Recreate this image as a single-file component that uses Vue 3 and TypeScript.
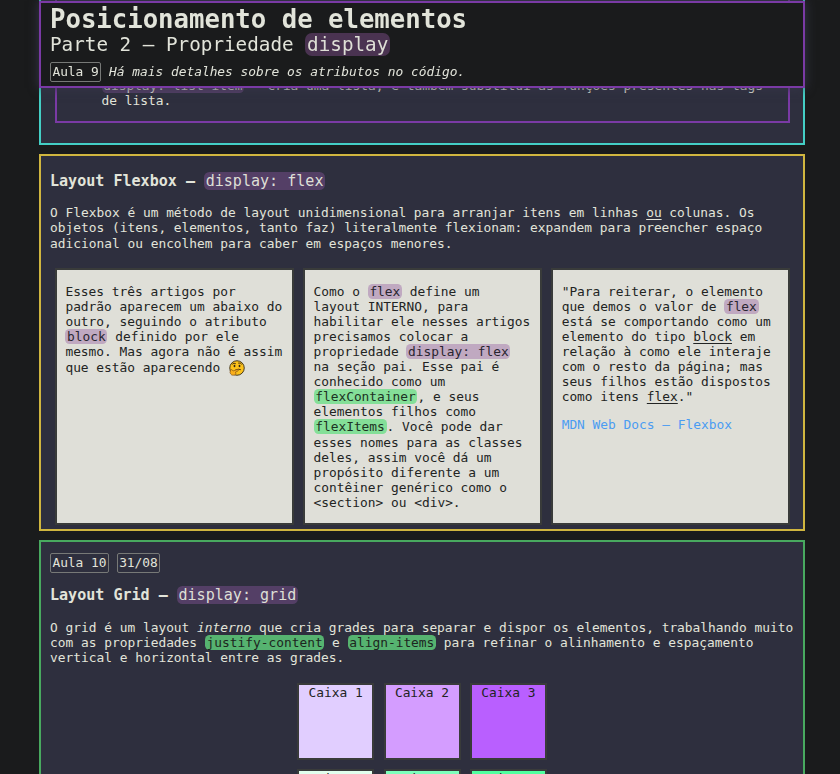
<script setup lang="ts">
interface Box {
  label: string
  tone: string
}

const boxes: Box[] = [
  { label: 'Caixa 1', tone: 'purple-1' },
  { label: 'Caixa 2', tone: 'purple-2' },
  { label: 'Caixa 3', tone: 'purple-3' },
  { label: 'Caixa 4', tone: 'green-1' },
  { label: 'Caixa 5', tone: 'green-2' },
  { label: 'Caixa 6', tone: 'green-3' },
]
</script>

<template>
  <div class="page">
    <header class="top">
      <h1>Posicionamento de elementos</h1>
      <h2>Parte 2 – Propriedade <code>display</code></h2>
      <p class="note"><span class="tag">Aula 9</span> <em>Há mais detalhes sobre os atributos no código.</em></p>
    </header>

    <main>
      <section class="block-section">
        <article class="outlined">
          <ul>
            <li><code>display: list-item</code> – cria uma lista, e também substitui as funções presentes nas tags de lista.</li>
          </ul>
        </article>
      </section>

      <section class="flex-section">
        <h3>Layout Flexbox – <code>display: flex</code></h3>
        <p class="intro">O Flexbox é um método de layout unidimensional para arranjar itens em linhas <u>ou</u> colunas. Os objetos (itens, elementos, tanto faz) literalmente flexionam: expandem para preencher espaço adicional ou encolhem para caber em espaços menores.</p>
        <div class="cards">
          <article class="card">
            <p>Esses três artigos por padrão aparecem um abaixo do outro, seguindo o atributo <code>block</code> definido por ele mesmo. Mas agora não é assim que estão aparecendo
              <svg class="emoji" viewBox="0 0 32 32" role="img">
                <circle cx="16" cy="16" r="14.5" fill="#fcc21b" stroke="#493c20" stroke-width="2" />
                <ellipse cx="11" cy="12" rx="1.8" ry="2.4" fill="#33281b" />
                <ellipse cx="21" cy="12" rx="1.8" ry="2.4" fill="#33281b" />
                <path d="M7 8q3-3 6-1M19 6q4-1 6 2M13 20q6-3 10-1" fill="none" stroke="#513b16" stroke-width="2" stroke-linecap="round" />
                <path d="M3 20q3-3 5 2l9-3q3 0 1 3l-5 2q3 4-2 6-7 2-9-5z" fill="#f9ae1b" stroke="#80511a" stroke-width="1.3" />
              </svg>
            </p>
          </article>
          <article class="card">
            <p>Como o <code>flex</code> define um layout INTERNO, para habilitar ele nesses artigos precisamos colocar a propriedade <code>display: flex</code> na seção pai. Esse pai é conhecido como um <code class="green">flexContainer</code>, e seus elementos filhos como <code class="green">flexItems</code>. Você pode dar esses nomes para as classes deles, assim você dá um propósito diferente a um contêiner genérico como o &lt;section&gt; ou &lt;div&gt;.</p>
          </article>
          <article class="card">
            <p>"Para reiterar, o elemento que demos o valor de <code>flex</code> está se comportando como um elemento do tipo <u>block</u> em relação à como ele interaje com o resto da página; mas seus filhos estão dispostos como itens <u>flex</u>."</p>
            <a>MDN Web Docs – Flexbox</a>
          </article>
        </div>
      </section>

      <section class="grid-section">
        <p class="tags"><span class="tag">Aula 10</span> <span class="tag">31/08</span></p>
        <h3>Layout Grid – <code>display: grid</code></h3>
        <p class="intro">O grid é um layout <em>interno</em> que cria grades para separar e dispor os elementos, trabalhando muito com as propriedades <code class="green">justify-content</code> e <code class="green">align-items</code> para refinar o alinhamento e espaçamento vertical e horizontal entre as grades.</p>
        <div class="boxes">
          <div v-for="box in boxes" :key="box.label" class="box" :class="box.tone">{{ box.label }}</div>
        </div>
      </section>
    </main>
  </div>
</template>

<style>
body {
  background: #1a1b1c;
}
</style>

<style scoped>
.page {
  box-sizing: border-box;
  width: 840px;
  height: 774px;
  overflow: hidden;
  padding: 0 35px 0 39px;
  color: #e2e4da;
  font: 12.86px/15.07px "DejaVu Sans Mono", "Liberation Mono", monospace;
}
.page * {
  box-sizing: border-box;
}
h1, h2, h3, p, ul {
  margin: 0;
}
code {
  font-family: inherit;
  font-weight: 400;
  padding: 0 0.13em;
  border-radius: 0.36em;
  color: #dedfd6;
  background: #543f66;
}
code.green {
  background: #56b370;
  color: #1d2620;
}
u {
  text-underline-offset: 2px;
}
.top {
  position: fixed;
  z-index: 2;
  top: 1px;
  left: 39px;
  width: 766px;
  height: 87px;
  padding: 2px 9px;
  background: #1a1b1c;
  border: 2px solid #7a3aa5;
  box-shadow: 0 0 10px #353648;
}
h1 {
  font-size: 25.66px;
  line-height: 29px;
}
h2 {
  font-size: 19.27px;
  line-height: 22px;
  font-weight: 400;
}
.top code {
  padding: 0 0.1em;
  background: #4a3351;
}
.note {
  margin-top: 6px;
  line-height: 20px;
}
.tag {
  display: inline-block;
  line-height: 16px;
  padding: 1px 1.4px;
  border: 1px solid #777977;
  border-radius: 2px;
}
main {
  display: flex;
  flex-direction: column;
  gap: 9px;
}
section {
  padding: 0 9px;
  background: #2e2f3e;
  border: 2px solid;
}
.block-section {
  height: 145px;
  padding: 0 13px 20px 14px;
  border-color: #44cfc5;
  border-top: 0;
}
.outlined {
  display: flex;
  flex-direction: column;
  justify-content: flex-end;
  height: 123px;
  padding: 0 9px 13px 12px;
  border: 2px solid #7a3aa5;
  border-top: 0;
}
.outlined ul {
  padding-left: 32.5px;
}
.flex-section {
  height: 377px;
  padding-top: 16px;
  border-color: #d0b63f;
}
.grid-section {
  height: 260px;
  padding-top: 11px;
  border-color: #48a95f;
}
h3 {
  font-size: 15.06px;
  line-height: 18px;
}
h3 code {
  padding: 0 0.11em;
}
.intro {
  margin-top: 15.5px;
}
.flex-section .intro {
  margin-top: 14.9px;
  line-height: 15.5px;
}
.cards {
  display: grid;
  grid-template-columns: repeat(3, 1fr);
  gap: 9.4px;
  height: 257px;
  margin: 16.6px 4px 0 5px;
}
.card {
  padding: 13.6px 8px 8px 8.4px;
  line-height: 15.1px;
  color: #222423;
  background: #dfdfd8;
  border: 2px solid #393b3a;
}
.card code {
  color: #292530;
  background: #c0a9c1;
}
.card code.green {
  color: #1c3223;
  background: #84df98;
}
.card a {
  display: block;
  margin-top: 13px;
  color: #4b9cf2;
}
.emoji {
  width: 16px;
  height: 16px;
  margin-left: 0.6px;
  vertical-align: -3.4px;
  margin-top: 0.8px;
}
.tags {
  line-height: 20px;
}
.grid-section h3 {
  margin-top: 13px;
}
.boxes {
  display: grid;
  grid-template-columns: repeat(3, 77px);
  grid-auto-rows: 77px;
  gap: 9.4px;
  justify-content: center;
  margin-top: 18px;
}
.box {
  color: #222423;
  text-align: center;
  border: 2px solid #393b3a;
}
.purple-1 { background: #e1ceff; }
.purple-2 { background: #d49dff; }
.purple-3 { background: #b95fff; }
.green-1 { background: #e1ffee; }
.green-2 { background: #7dffbc; }
.green-3 { background: #50ff9f; }
</style>
